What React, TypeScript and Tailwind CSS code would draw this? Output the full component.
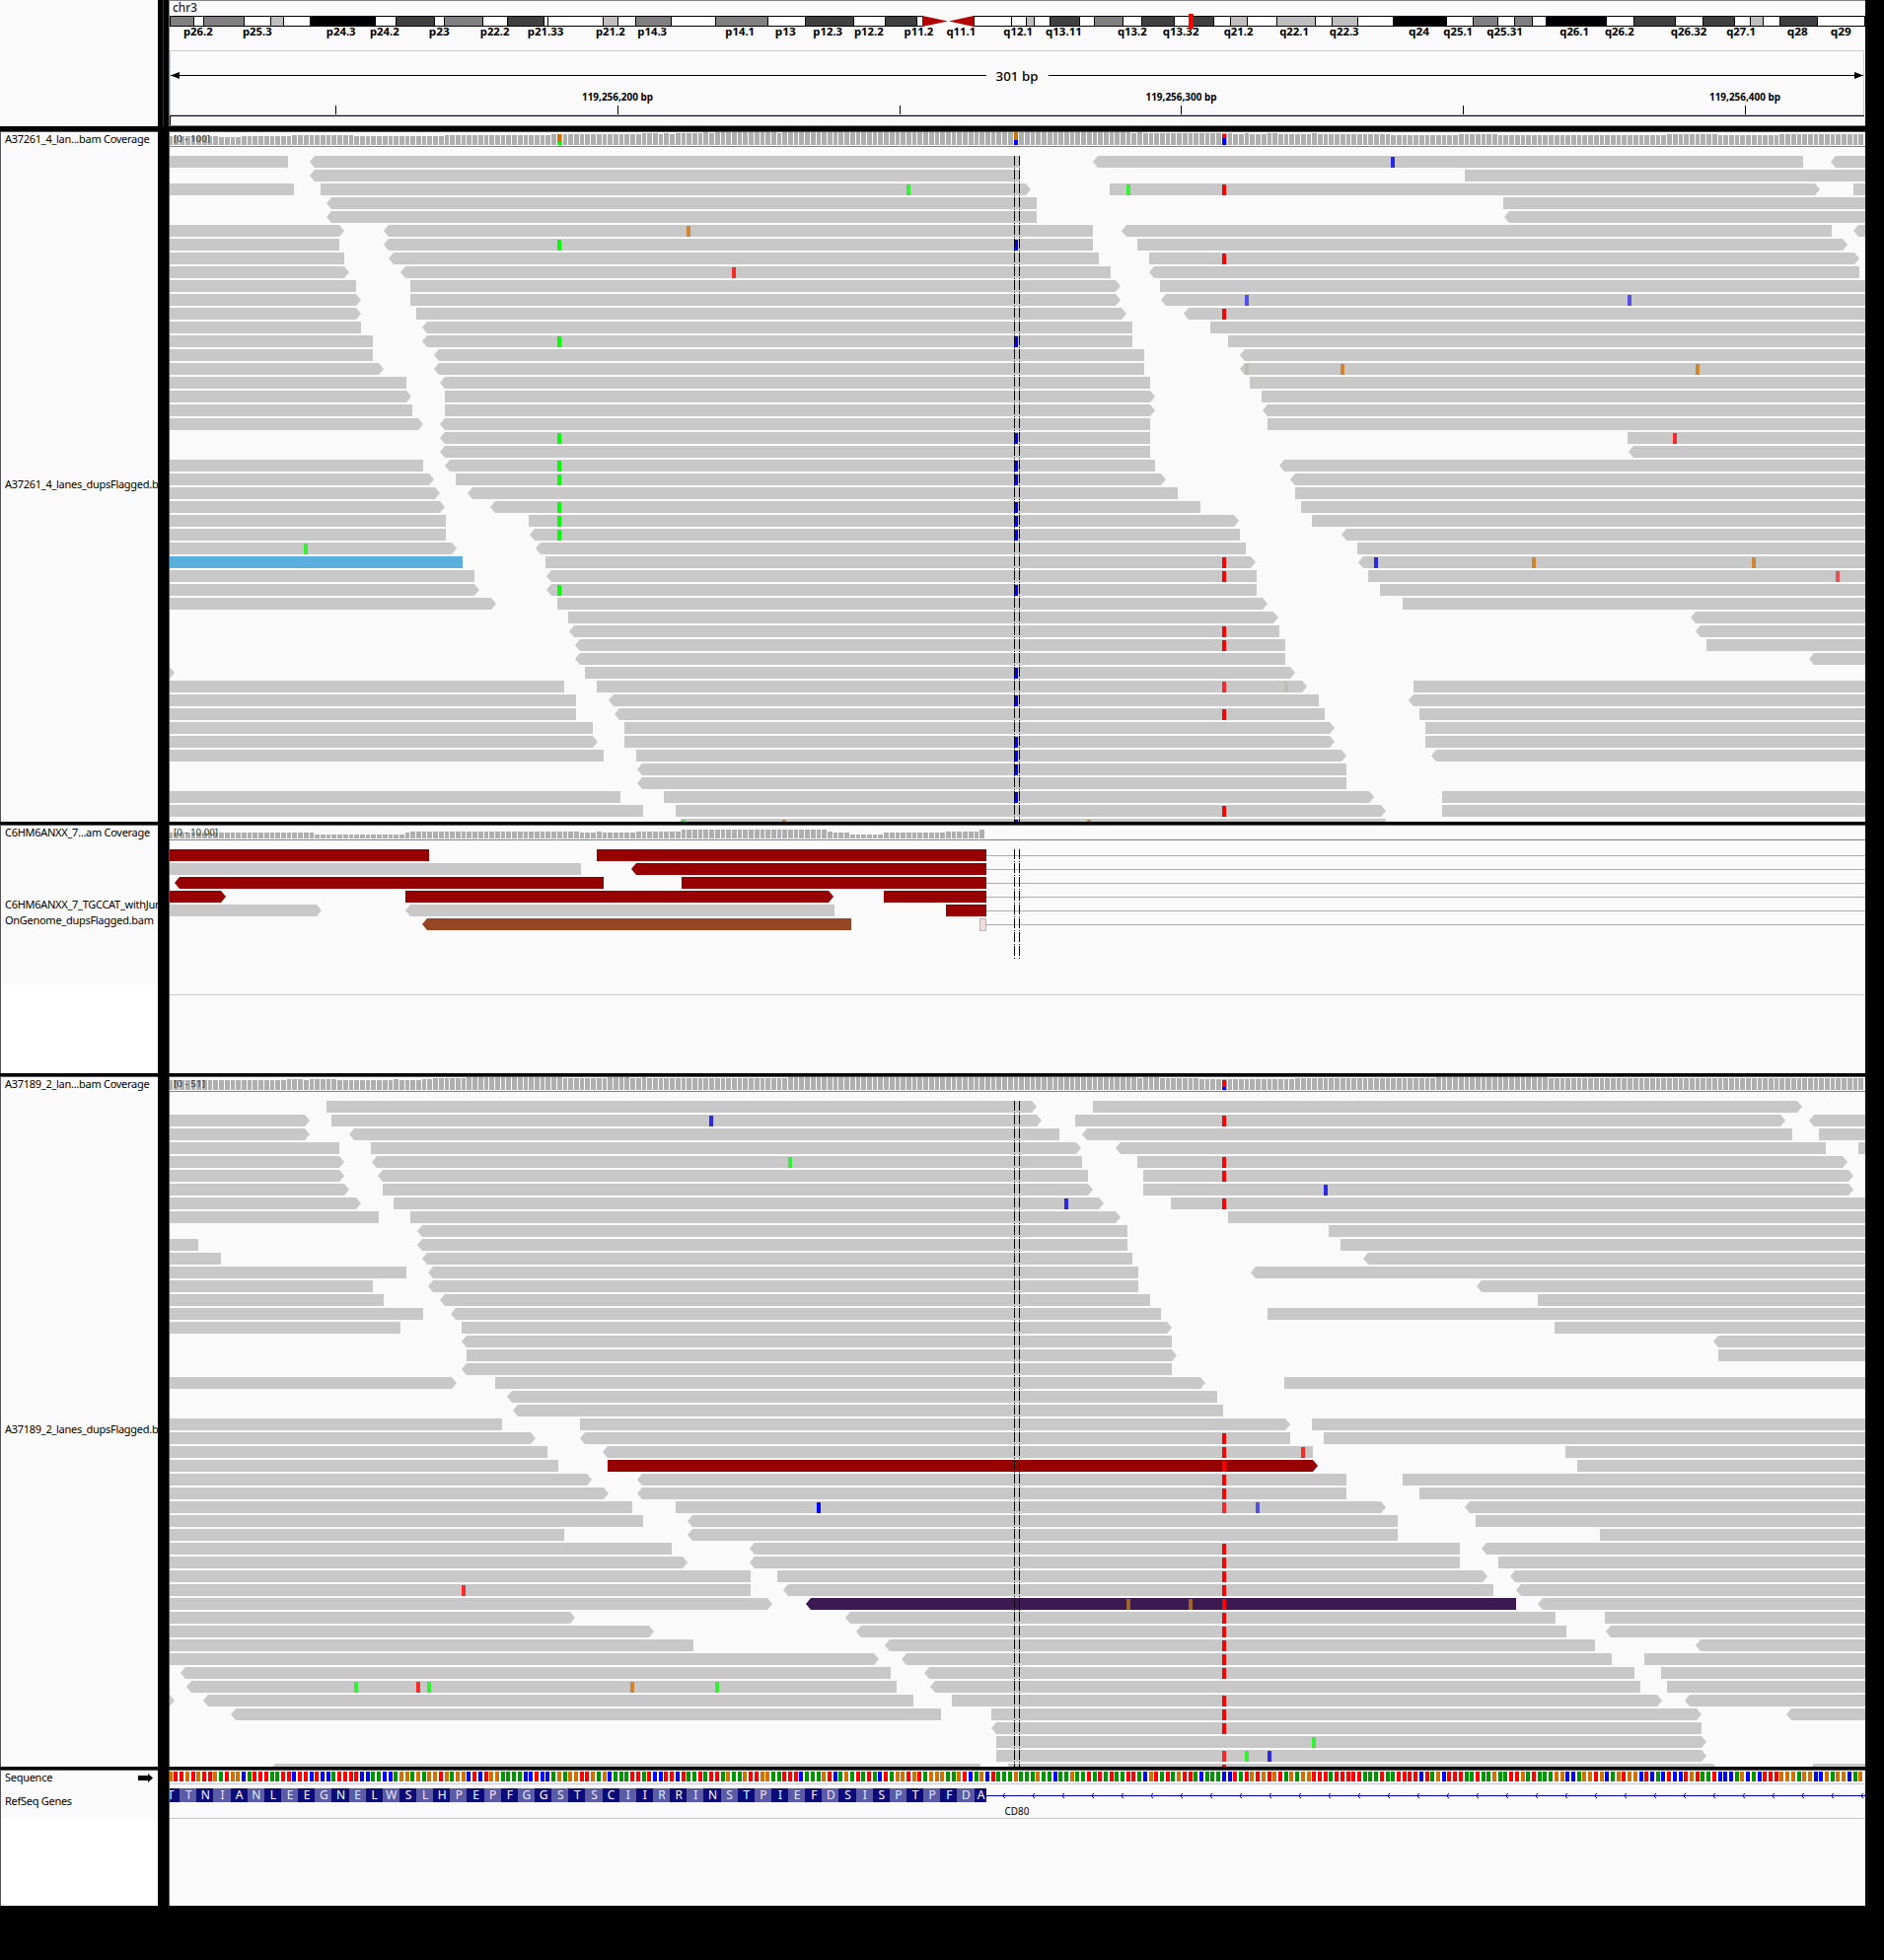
import React from "react";

/* Horizontal genome scale: base index (0..301) to screen column. */
const X0 = 171.24;
const BP = 5.712;
const RIGHT = 1891;
const LEFT = 172;
const startX = (k: number) => Math.max(LEFT, Math.floor(X0 + BP * k));
/* Reads that begin left of the view are drawn one column longer. */
const endX = (k: number, clipped: boolean) => {
  if (k >= 301) return RIGHT;
  const x = X0 + BP * k;
  return Math.max(LEFT, clipped ? Math.round(x) + 1 : Math.ceil(x - 0.05));
};

const FONT = "'Noto Sans', 'Open Sans', 'DejaVu Sans', sans-serif";

const BASE_COLOR: Record<string, string> = {
  A: "#009600",
  C: "#0000ff",
  G: "#d17105",
  T: "#ff0000",
};

const FILL: Record<string, string> = {
  "": "#c8c8c8",
  R: "#960000",
  B: "#5aafdc",
  N: "#964623",
  P: "#3c1950",
};

const MARK: Record<string, string> = {
  a: "#00ff00",
  A: "#32f032",
  c: "#0000ff",
  C: "#2828e6",
  L: "#5050e6",
  g: "#d18530",
  G: "#a06428",
  t: "#ff0000",
  T: "#fa2828",
  U: "#e65050",
  x: "#bebeb4",
};

/* Reads of one packed row, e.g. "<26-151> R:10-20". */
const PANEL_1 = [
  "0-21 <26-151 <165-290 <296-301",
  "<26-151 230-301",
  "0-22 27-152> 167-292> 299-301",
  "<29-154 237-301",
  "<29-154 <238-301",
  "0-30> <39-164 <170-295 <300-301",
  "0-30 <39-164 172-297>",
  "0-31 <40-165 174-299>",
  "0-31> <42-167 <175-300",
  "0-33 43-168> 176-301",
  "0-33> 43-168> <177-301",
  "0-33> 44-169> <181-301",
  "0-34 <46-171 185-301",
  "0-36 <46-171 188-301",
  "0-36 <48-173 <191-301",
  "0-37> <48-173 <191-301",
  "0-42 <49-174 192-301",
  "0-42> 49-174> 194-301",
  "0-43 49-174> <195-301",
  "0-44> <49-174 195-301",
  "<49-174 259-301",
  "<49-174 <260-301",
  "0-45 <50-175 <198-301",
  "0-46> 51-176> <200-301",
  "0-47> <54-179 200-301",
  "0-48> <58-183 201-301",
  "0-49 64-189> 203-301",
  "0-49 <65-190 <209-301",
  "0-50> <66-191 211-301",
  "B:0-52 67-192> <212-301",
  "0-54 <68-193 213-301",
  "0-54> <68-193 215-301",
  "0-57> 69-194> 219-301",
  "71-196> <271-301",
  "<72-197 <272-301",
  "<73-198 273-301",
  "<73-198 <292-301",
  "0-0> 74-199>",
  "0-70 76-201> 221-301",
  "0-72 <79-204 <221-301",
  "0-72 <80-205 222-301",
  "0-75 81-206> 223-301",
  "0-75> 81-206> 223-301",
  "0-77 83-208> <225-301",
  "<84-209",
  "<84-209",
  "0-80 88-213> 226-301",
  "0-84 90-215> 226-301",
  "<91-216",
];

const MARKS_1 =
  "0:217C 2:131A 2:170A 2:187t 5:92g 6:69a 6:150c 7:187t 8:100T 10:191L 10:259L 11:187t 13:69a 13:150c 15:191x 15:208g 15:271g 20:69a 20:150c 20:267T 22:69a 22:150c 23:69a 23:150c 25:69a 25:150c 26:69a 26:150c 27:69a 27:150c 28:24A 29:187t 29:214C 29:242g 29:281g 30:187t 30:296U 31:69a 31:150c 34:187t 35:187t 37:150c 38:187T 38:198x 39:150c 40:187t 42:150c 43:150c 44:150c 46:150c 47:187t 48:91A 48:109g 48:150c 48:163g";

const PANEL_2 = [
  "R:0-46 R:76-145",
  "0-73 R:<83-145",
  "R:<2-77 R:91-145",
  "R:0-9> R:42-117> R:127-145",
  "0-26> <43-118 R:138-145",
  "N:<46-121",
];

const PANEL_3 = [
  "28-153> 164-289>",
  "0-24> 29-154> 161-286> <292-301",
  "0-24> <33-158 <163-288 293-301",
  "0-30 36-161> <169-294 300-301",
  "0-30> <37-162 172-297>",
  "0-30> <38-163 173-298>",
  "0-31> 38-163> 173-298>",
  "0-33> 40-165> 178-301",
  "0-37 43-168> 188-301",
  "<45-170 206-301",
  "0-5 <45-170 208-301",
  "0-9 <46-171 <213-301",
  "0-42 <47-172 <193-301",
  "0-36 <47-172 <233-301",
  "0-38 <49-174 243-301",
  "0-45 <51-176 195-301",
  "0-41 52-177> 246-301",
  "<53-178 <275-301",
  "53-178> 275-301",
  "<53-178",
  "0-50> 58-183> 198-301",
  "<61-186",
  "<62-187",
  "0-59 73-198> 203-301",
  "0-64> <74-199 205-301",
  "0-67 <78-203 248-301",
  "0-69 R:78-203> 250-301",
  "0-74> <84-209 219-301",
  "0-77> <84-209 222-301",
  "0-82 90-215> <231-301",
  "0-84 <93-218 232-301",
  "0-70 <93-218 254-301",
  "0-89 <104-229 <234-301",
  "0-91> <104-229 236-301",
  "0-103 108-233> <239-301",
  "0-103 <110-235 <240-301",
  "0-106> P:<114-239 <244-301",
  "0-71> <121-246 255-301",
  "0-85> <123-248 <256-301",
  "0-93 <128-253 <272-301",
  "0-125> <131-256 262-301",
  "<3-128 <135-260 265-301",
  "<4-129 <136-261 266-301",
  "0-0> <7-132 139-264> <270-301",
  "<12-137 146-271> <288-301",
  "<147-272",
  "147-272>",
  "147-272>",
  "<19-144 149-274> <292-301",
];

const MARKS_3 =
  "1:96C 1:187t 4:110A 4:187t 5:187t 6:205C 7:159C 7:187t 24:187t 25:187t 25:201T 26:187t 27:187t 28:187t 29:115c 29:187T 29:193L 32:187t 33:187t 34:187t 35:187t 35:52T 36:170G 36:181G 36:187t 37:187t 38:187t 39:187t 40:187t 41:187t 42:33A 42:44T 42:46A 42:82g 42:97A 43:187t 44:187t 45:187t 46:203A 47:187T 47:191A 47:195C 48:187t";

/* Coverage as runs: "<first base>:<bar height>". */
const COVER_1 =
  "0:9 9:8 13:9 22:10 33:9 49:10 68:11 84:12 87:11 88:12 89:11 90:12 95:13 96:12 97:13 108:12 109:13 171:12 172:13 173:12 189:11 191:12 192:11 195:12 197:11 203:12 204:11 217:10 229:11 236:10 266:11 275:10 286:11";
const COVER_2 =
  "0:6 26:4 42:6 43:7 73:6 76:7 77:6 83:7 91:9 117:7 118:6 121:4 127:6 138:7 144:9 145:0";
const COVER_3 =
  "0:10 21:11 24:10 25:11 30:10 40:11 41:10 45:11 47:12 53:13 70:12 78:13 82:12 84:13 85:12 110:13 172:12 173:13 176:12 183:11 200:12 225:13 245:12";

const SEQ =
  "GTTGTGTTGATGGCATTTAATTCTTCTCCATTTTCCAACCAGGAGAGGTGA" +
  "GGCTCTGGAAAACCTCCAGAGGTTGAGCAAA" +
  "TTATCCTTCTAATATTAGAAGTTGGAATTTCAAAGTCAGATATACTAGGTGTAGGGAAGTCAGCTAAAGAAAGAACAAGAATATATAATTACGTATAGTTACAAACCTATGTG" +
  "TGTAGAGGTTTATTTTTAAATAATTTTCTAGCTTTAATAAGAATTGATAAAGGCCAGGTGCAGTGGCTCACTCCTGTAATCCCAGCACTTTGGGAGGCCGAGGCAG";

const AMINO = "TTNIANLEEGNELWSLHPEPFGGSTSCIIRRINSTPIEFDSISPTPFDA";

/* Chromosome bands: [right edge, stain]. */
const BANDS: [number, string][] = [
  [196, "m"], [206, "w"], [247, "m"], [274, "w"], [287, "l"], [314, "w"], [380, "k"], [401, "w"],
  [440, "d"], [450, "w"], [489, "m"], [514, "w"], [551, "d"], [555, "w"], [611, "w"], [626, "l"],
  [644, "w"], [680, "m"], [725, "w"], [778, "m"], [816, "w"], [865, "d"], [897, "w"], [929, "d"],
  [935, "w"], [987, "cen"], [1025, "w"], [1040, "w"], [1048, "l"], [1064, "w"], [1094, "d"],
  [1109, "w"], [1138, "m"], [1157, "w"], [1190, "d"], [1206, "w"], [1230, "d"], [1247, "w"],
  [1264, "l"], [1294, "w"], [1333, "l"], [1350, "w"], [1376, "l"], [1412, "w"], [1466, "k"],
  [1493, "w"], [1518, "m"], [1535, "w"], [1553, "m"], [1567, "w"], [1628, "k"], [1656, "w"],
  [1698, "d"], [1726, "w"], [1758, "d"], [1774, "w"], [1787, "l"], [1804, "w"], [1842, "d"], [1890, "w"],
];
const STAIN: Record<string, string> = { w: "#ffffff", l: "#bfbfbf", m: "#808080", d: "#404040", k: "#000000" };

const BAND_LABELS: [number, string][] = [
  [200.8, "p26.2"], [260.8, "p25.3"], [345.7, "p24.3"], [389.8, "p24.2"], [445.3, "p23"], [501.6, "p22.2"],
  [553, "p21.33"], [618.8, "p21.2"], [661.2, "p14.3"], [750.2, "p14.1"], [796.3, "p13"], [839.2, "p12.3"],
  [880.8, "p12.2"], [931.4, "p11.2"], [974.3, "q11.1"], [1032.2, "q12.1"], [1078.4, "q13.11"],
  [1147.8, "q13.2"], [1197.1, "q13.32"], [1255.5, "q21.2"], [1312, "q22.1"], [1362.7, "q22.3"],
  [1438.6, "q24"], [1478.2, "q25.1"], [1525.5, "q25.31"], [1596.1, "q26.1"], [1641.8, "q26.2"],
  [1712, "q26.32"], [1765, "q27.1"], [1822.2, "q28"], [1866.3, "q29"],
];

function Reads({ rows, top }: { rows: string[]; top: number }) {
  return (
    <g>
      {rows.map((row, r) =>
        row.split(" ").map((item, i) => {
          const m = /^(?:([A-Z]):)?(<?)(\d+)-(\d+)(>?)$/.exec(item);
          if (!m) return null;
          const y = top + r * 14;
          const a = startX(+m[3]);
          const b = endX(+m[4], m[3] === "0");
          const l = m[2] ? 5 : 0;
          const t = m[5] ? 5 : 0;
          return (
            <path
              key={r + "-" + i}
              fill={FILL[m[1] || ""]}
              d={`M${a} ${y}H${b}l${t} 6l${-t} 6H${a}l${-l} -6Z`}
            />
          );
        })
      )}
    </g>
  );
}

function Marks({ spec, top }: { spec: string; top: number }) {
  return (
    <g shapeRendering="crispEdges">
      {spec.split(" ").map((s, i) => {
        const m = /^(\d+):(\d+)(\w)$/.exec(s)!;
        return (
          <rect key={i} x={startX(+m[2])} y={top + +m[1] * 14 + 1} width={4} height={11} fill={MARK[m[3]]} />
        );
      })}
    </g>
  );
}

function Coverage({ spec, base }: { spec: string; base: number }) {
  const runs = spec.split(" ").map((s) => s.split(":").map(Number));
  const bars: React.ReactNode[] = [];
  runs.forEach(([from, h], i) => {
    const to = i + 1 < runs.length ? runs[i + 1][0] : 301;
    for (let k = from; k < to && h > 0; k++) {
      const x = startX(k);
      bars.push(<rect key={k} x={x} y={base - h} width={Math.max(1, startX(k + 1) - x - 1)} height={h} />);
    }
  });
  return (
    <g shapeRendering="crispEdges">
      <g fill="#afafaf">{bars}</g>
      <rect x={LEFT} y={base + 1} width={1719} height={1} fill="#828282" />
    </g>
  );
}

function Split({ k, top, mid, base, hi, lo }: { k: number; top: number; mid: number; base: number; hi: string; lo: string }) {
  return (
    <g shapeRendering="crispEdges">
      <rect x={startX(k)} y={top} width={4} height={mid - top} fill={hi} />
      <rect x={startX(k)} y={mid} width={4} height={base - mid} fill={lo} />
    </g>
  );
}

function Guide({ top, bottom }: { top: number; bottom: number }) {
  return (
    <g stroke="#000" strokeWidth={1} strokeDasharray="10 2 1 1" shapeRendering="crispEdges">
      <path d={`M1028.5 ${top}V${bottom}M1033.5 ${top}V${bottom}`} fill="none" />
    </g>
  );
}

function Range({ y, w, children }: { y: number; w: number; children: string }) {
  return (
    <text x={176} y={y} fontSize={9} fill="#323232" fontFamily={FONT} textLength={w} lengthAdjust="spacingAndGlyphs">
      {children}
    </text>
  );
}

function Plot({ y, h, children }: { y: number; h: number; children: React.ReactNode }) {
  return (
    <svg className="block shrink-0 overflow-visible" width={1719} height={h} viewBox={`172 ${y} 1719 ${h}`}>
      {children}
    </svg>
  );
}

function Row({ className, names, children }: { className: string; names: React.ReactNode; children: React.ReactNode }) {
  return (
    <section className={"flex shrink-0 gap-[11px] " + className}>
      <div className="w-[160px] overflow-hidden whitespace-nowrap border-l border-t border-[#555] bg-[#fafafa] pl-1 text-[11px] leading-[14px] tracking-[-0.28px] text-black">
        {names}
      </div>
      <div className="w-[1720px] overflow-hidden border-l border-t border-[#555] bg-[#fafafa]">{children}</div>
    </section>
  );
}

function Ideogram() {
  let x = 172;
  return (
    <g shapeRendering="crispEdges">
      {BANDS.map(([end, s], i) => {
        const a = x;
        x = end;
        if (s === "cen")
          return (
            <path key={i} fill="#b40000" shapeRendering="auto" d={`M${a} 16L961 21.5L${a} 27ZM${end} 16L962 21.5L${end} 27Z`} />
          );
        return (
          <g key={i}>
            <rect x={a} y={16} width={end - a + 1} height={11} fill="#000" />
            <rect x={a + 1} y={17} width={Math.max(1, end - a - 1)} height={9} fill={STAIN[s]} />
          </g>
        );
      })}
    </g>
  );
}

function Header() {
  return (
    <Plot y={1} h={126}>
      <text x={175} y={12} fontSize={12} fontWeight={500} fill="#222" fontFamily={FONT} textLength={25} lengthAdjust="spacingAndGlyphs">chr3</text>
      <Ideogram />
      <g fontFamily={FONT} fontWeight={700} fontSize={11} textAnchor="middle">
        {BAND_LABELS.map(([cx, t]) => {
          const w = t.includes(".") ? (t.length - 1) * 7 + 1.7 : t.length * 7;
          return (
            <text key={t} x={cx} y={36} textLength={w} lengthAdjust="spacingAndGlyphs">{t}</text>
          );
        })}
      </g>
      <rect x={1205} y={14} width={5} height={15} fill="#ff0000" />
      <g shapeRendering="crispEdges">
        <path d="M172.5 116V51.5H1889.5V116.5H172" fill="none" stroke="#c8c8d2" />
        <path d="M172.5 127V117.5H1890" fill="none" stroke="#000" />
        <rect x={173} y={76} width={827} height={1} />
        <rect x={1063} y={76} width={826} height={1} />
        {[340, 626, 912, 1197, 1483, 1769].map((x) => (
          <rect key={x} x={x} y={107} width={1} height={9} />
        ))}
      </g>
      <path d="M173 76.5L182 73V80ZM1889 76.5L1880 73V80Z" />
      <text x={1031} y={82} fontSize={13} fontWeight={500} fontFamily={FONT} textAnchor="middle" textLength={43} lengthAdjust="spacingAndGlyphs">301 bp</text>
      <g fontFamily={FONT} fontWeight={700} fontSize={10} textAnchor="middle">
        {["119,256,200 bp", "119,256,300 bp", "119,256,400 bp"].map((t, i) => (
          <text key={t} x={626 + i * 571.5} y={102} textLength={72} lengthAdjust="spacingAndGlyphs">{t}</text>
        ))}
      </g>
    </Plot>
  );
}

function Genes() {
  const arrows: number[] = [];
  for (let x = 1016; x < 1891; x += 30) arrows.push(x);
  return (
    <Plot y={1795} h={137}>
      <g shapeRendering="crispEdges">
        <rect x={172} y={1795} width={1719} height={12} fill="#fff" />
        {SEQ.split("").map((b, k) => (
          <rect key={k} x={startX(k)} y={1796} width={k ? 4 : 3} height={10} fill={BASE_COLOR[b]} />
        ))}
        <rect x={172} y={1808} width={1719} height={1} fill="#c8c8d2" />
        <rect x={172} y={1843} width={1719} height={1} fill="#c8c8d2" />
        <rect x={1000} y={1820} width={891} height={1} fill="#0000b4" />
        {AMINO.split("").map((_, i) => {
          const a = startX(i * 3 - 1);
          const b = i === 48 ? 1000 : startX(i * 3 + 2);
          return <rect key={i} x={a} y={1813} width={b - a} height={14} fill={i % 2 ? "#5c5ca6" : "#0c0c78"} />;
        })}
      </g>
      <g fontFamily={FONT} fontSize={12} textAnchor="middle" fill="#fff">
        {AMINO.split("").map((c, i) => (
          <text
            key={i}
            x={i === 0 ? 173 : i === 48 ? 994.5 : X0 + BP * (i * 3 + 0.5)}
            y={1824}
            fillOpacity={i % 2 ? 0.9 : 1}
          >
            {c}
          </text>
        ))}
      </g>
      <g fill="none" stroke="#0000ff" strokeWidth={1}>
        {arrows.map((x) => (
          <path key={x} d={`M${x + 3} 1818L${x + 0.5} 1820.5L${x + 3} 1823`} />
        ))}
      </g>
      <text x={1018.5} y={1840} fontSize={11} fontFamily={FONT} textLength={25} lengthAdjust="spacingAndGlyphs">CD80</text>
    </Plot>
  );
}

export default function App() {
  return (
    <main
      className="flex h-[1987px] w-[1910px] flex-col overflow-hidden bg-black"
      style={{ fontFamily: FONT }}
    >
      <section className="flex h-[128px] shrink-0">
        <div className="w-[160px] bg-[#fafafa]" />
        <div className="ml-[5px] mr-[5px] w-px bg-[#333]" />
        <div className="w-[1720px] border border-r-0 border-[#828282] bg-[#fafafa]">
          <Header />
        </div>
      </section>

      <Row
        className="mt-[5px] h-[700px]"
        names={
          <>
            <div>A37261_4_lan...bam Coverage</div>
            <div className="pt-[336px]">A37261_4_lanes_dupsFlagged.bam</div>
          </>
        }
      >
        <Plot y={134} h={699}>
          <Coverage spec={COVER_1} base={147} />
          <Split k={69} top={136} mid={144} base={147} hi="#d17105" lo="#00ff00" />
          <Split k={150} top={134} mid={142} base={147} hi="#d17105" lo="#0000ff" />
          <Split k={187} top={136} mid={140} base={147} hi="#ff0000" lo="#0000ff" />
          <Range y={144} w={37}>[0 - 100]</Range>
          <Reads rows={PANEL_1} top={158} />
          <Marks spec={MARKS_1} top={158} />
          <Guide top={158} bottom={833} />
        </Plot>
      </Row>

      <Row
        className="mt-[3px] h-[252px]"
        names={
          <div className="flex h-full flex-col">
            <div>C6HM6ANXX_7...am Coverage</div>
            <div className="pt-[58px] leading-[16px]">
              C6HM6ANXX_7_TGCCAT_withJunctions
              <br />
              OnGenome_dupsFlagged.bam
            </div>
            <div className="-ml-1 mt-[57px] flex-1 bg-white" />
          </div>
        }
      >
        <Plot y={837} h={251}>
          <Coverage spec={COVER_2} base={850} />
          <Range y={847} w={45}>[0 - 10.00]</Range>
          <g shapeRendering="crispEdges">
            {[0, 1, 2, 3, 4, 5].map((r) => (
              <rect key={r} x={1000} y={867 + r * 14} width={891} height={1} fill="#96b4c8" />
            ))}
            <rect x={993.5} y={931.5} width={6} height={12} fill="#f0dcdc" stroke="#b4b4b4" />
            <rect x={172} y={1008} width={1719} height={1} fill="#c8c8c8" />
          </g>
          <Reads rows={PANEL_2} top={861} />
          <Guide top={861} bottom={973} />
        </Plot>
      </Row>

      <Row
        className="mt-[3px] h-[700px]"
        names={
          <>
            <div>A37189_2_lan...bam Coverage</div>
            <div className="pt-[336px]">A37189_2_lanes_dupsFlagged.bam</div>
          </>
        }
      >
        <Plot y={1092} h={699}>
          <Coverage spec={COVER_3} base={1105} />
          <Split k={187} top={1095} mid={1102} base={1105} hi="#ff0000" lo="#0000ff" />
          <Range y={1102} w={32}>[0 - 51]</Range>
          <Reads rows={PANEL_3} top={1116} />
          <Marks spec={MARKS_3} top={1116} />
          <Guide top={1116} bottom={1791} />
        </Plot>
      </Row>

      <Row
        className="mt-[3px] h-[138px]"
        names={
          <div className="flex h-full flex-col">
            <div className="flex items-center justify-between pr-[5px]">
              <span>Sequence</span>
              <svg width={15} height={9} viewBox="0 0 15 9">
                <path d="M0 2H10V0L15 4.5L10 9V7H0Z" />
              </svg>
            </div>
            <div className="pt-[10px]">RefSeq Genes</div>
            <div className="-ml-1 mt-[10px] flex-1 bg-white" />
          </div>
        }
      >
        <Genes />
      </Row>
    </main>
  );
}
